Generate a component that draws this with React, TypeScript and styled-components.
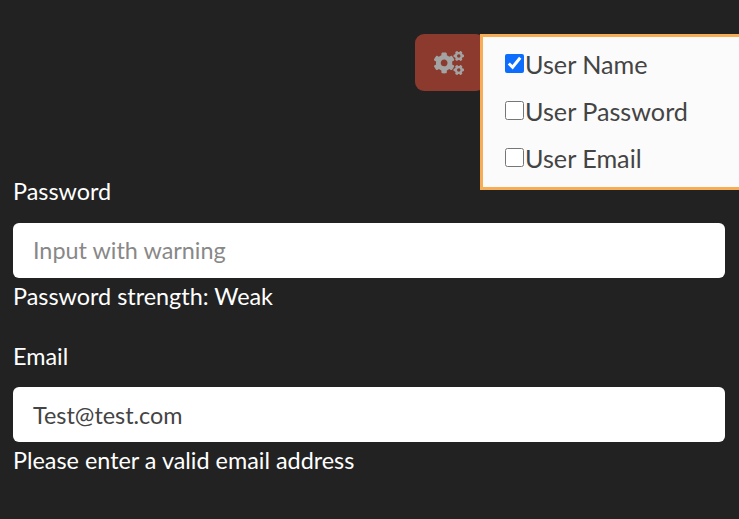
import React from "react";
import styled, { createGlobalStyle } from "styled-components";
import { FaCogs } from "react-icons/fa";

//STYLES
const GlobalStyle = createGlobalStyle`
  html, body {
    margin: 0;
    height: 100%;
    background: #222222;
  }
  * {
    box-sizing: border-box;
  }
`;

const Page = styled.div`
  position: relative;
  width: 739px;
  height: 519px;
  overflow: hidden;
  background: #222222;
  font-family: "Lato", "Liberation Sans", sans-serif;
  font-size: 23.4px;
  line-height: 36px;
  color: #ffffff;
`;

const Toolbar = styled.div`
  display: flex;
  justify-content: flex-end;
  height: 173.4px;
  padding-top: 34px;
`;

const MenuButton = styled.button`
  width: 70px;
  height: 57px;
  margin-right: 254px;
  display: flex;
  align-items: center;
  justify-content: flex-start;
  padding: 0 0 0 19px;
  border: none;
  border-radius: 9px;
  background: #8c3a2e;
  color: #a3a3a3;
  font-size: 30px;
`;

const Menu = styled.div`
  position: absolute;
  top: 34px;
  left: 480px;
  width: 280px;
  height: 156px;
  padding: 9px 0 0 22px;
  display: flex;
  flex-direction: column;
  gap: 11px;
  background: #fbfbfb;
  border: 3px solid #f6ad55;
  color: #444444;
  font-size: 25.2px;
`;

const MenuItem = styled.label`
  display: flex;
  align-items: center;
  height: 36px;
`;

const Check = styled.input`
  width: 19px;
  height: 19px;
  margin: 0 1px 1px 0;
  accent-color: #0d6efd;
`;

const Form = styled.form`
  padding: 0 14px 0 13px;
  display: flex;
  flex-direction: column;
  gap: 21.6px;
`;

const Field = styled.div`
  display: flex;
  flex-direction: column;
`;

const Label = styled.label`
  margin-bottom: 13.6px;
`;

const TextInput = styled.input`
  width: 100%;
  height: 55px;
  padding: 0 20px;
  border: none;
  border-radius: 6px;
  background: #ffffff;
  color: #444444;
  font-family: inherit;
  font-size: 23.4px;

  &::placeholder {
    color: #888888;
    opacity: 1;
  }
`;

const Help = styled.div`
  height: 38px;
`;

export default function App() {
  return (
    <Page>
      <GlobalStyle />
      <Toolbar>
        <MenuButton type="button" aria-label="Settings">
          <FaCogs />
        </MenuButton>
      </Toolbar>
      <Menu>
        <MenuItem>
          <Check type="checkbox" defaultChecked />
          User Name
        </MenuItem>
        <MenuItem>
          <Check type="checkbox" />
          User Password
        </MenuItem>
        <MenuItem>
          <Check type="checkbox" />
          User Email
        </MenuItem>
      </Menu>
      <Form>
        <Field>
          <Label>Password</Label>
          <TextInput placeholder="Input with warning" />
          <Help>Password strength: Weak</Help>
        </Field>
        <Field>
          <Label>Email</Label>
          <TextInput defaultValue="Test@test.com" />
          <Help>Please enter a valid email address</Help>
        </Field>
      </Form>
    </Page>
  );
}
